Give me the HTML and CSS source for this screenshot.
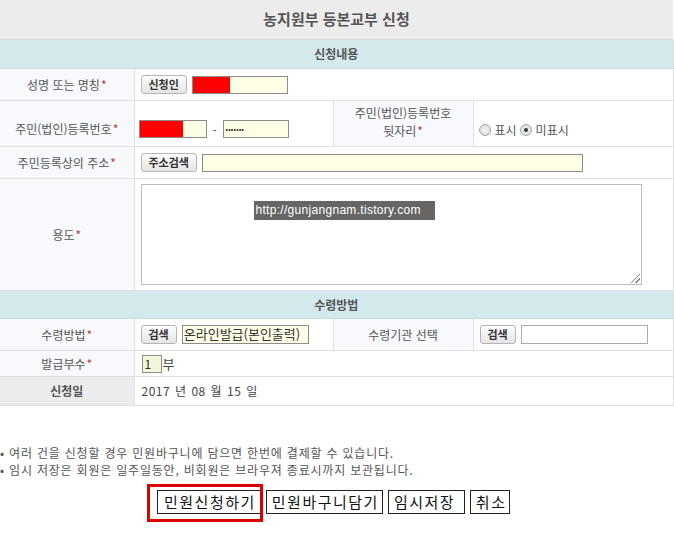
FILE: index.html
```html
<!DOCTYPE html>
<html lang="ko">
<head>
<meta charset="utf-8">
<link rel="stylesheet" href="styles.css">
</head>
<body>
<div class="page">
  <div class="title">농지원부 등본교부 신청</div>
  <table class="form">
    <colgroup>
      <col class="c1"><col class="c2"><col class="c3"><col class="c4">
    </colgroup>
    <tr class="sec"><td colspan="4">신청내용</td></tr>
    <tr class="r1">
      <th>성명 또는 명칭<em>*</em></th>
      <td colspan="3"><span class="btn">신청인</span><span class="inp w96 ml5"><span class="red r37"></span></span></td>
    </tr>
    <tr class="r2">
      <th class="low">주민(법인)등록번호<em>*</em></th>
      <td class="pl4 low"><span class="inp w68"><span class="red r43"></span></span><span class="dash">-</span><span class="inp w66 dots">•••••••</span></td>
      <th class="two">주민(법인)등록번호<br>뒷자리<em>*</em></th>
      <td class="radios low"><span class="radio"></span><span class="rl">표시</span><span class="radio on"></span><span class="rl">미표시</span></td>
    </tr>
    <tr class="r3">
      <th>주민등록상의 주소<em>*</em></th>
      <td colspan="3"><span class="btn">주소검색</span><span class="inp w381 ml5"></span></td>
    </tr>
    <tr class="r4">
      <th>용도<em>*</em></th>
      <td colspan="3"><div class="ta"><span class="wm">http://gunjangnam.tistory.com</span><span class="grip"></span></div></td>
    </tr>
    <tr class="sec"><td colspan="4">수령방법</td></tr>
    <tr class="r5">
      <th>수령방법<em>*</em></th>
      <td><span class="btn">검색</span><span class="inp w127 ml5 txt">온라인발급(본인출력)</span></td>
      <th>수령기관 선택</th>
      <td><span class="btn">검색</span><span class="inp w127 ml5 white"></span></td>
    </tr>
    <tr class="r6">
      <th>발급부수<em>*</em></th>
      <td colspan="3" class="pl6"><span class="inp w20 num">1</span><span class="bu">부</span></td>
    </tr>
    <tr class="r7">
      <th class="grey">신청일</th>
      <td colspan="3" class="date">2017 년 08 월 15 일</td>
    </tr>
  </table>
  <div class="notes">
    <p>• 여러 건을 신청할 경우 민원바구니에 담으면 한번에 결제할 수 있습니다.</p>
    <p>• 임시 저장은 회원은 일주일동안, 비회원은 브라우져 종료시까지 보관됩니다.</p>
  </div>
  <div class="actions">
    <span class="hl"><span class="abtn first">민원신청하기</span><span class="mark"></span></span><span class="abtn">민원바구니담기</span><span class="abtn">임시저장 </span><span class="abtn">취소</span>
  </div>
</div>
</body>
</html>
```
FILE: styles.css
```css
* { box-sizing: border-box; }
body {
  margin: 0;
  background: #fff;
  font-family: "Noto Sans CJK KR", "Noto Sans", sans-serif;
  font-size: 12px;
  color: #555;
}
.page { width: 674px; }
.title {
  width: 673px;
  height: 40px;
  background: #ececec;
  text-align: center;
  line-height: 38px;
  font-size: 15px;
  font-weight: bold;
  color: #555;
  border-bottom: 1px solid #dcdcdc;
}
.form {
  width: 673px;
  border-collapse: collapse;
  table-layout: fixed;
  border-right: 1px solid #ddd;
}
.c1 { width: 134px; }
.c2 { width: 199px; }
.c3 { width: 140px; }
.c4 { width: 200px; }
.form th, .form td {
  border-bottom: 1px solid #e0e0e0;
  padding: 0;
  vertical-align: middle;
}
.form th {
  background: #f7f9fc;
  font-weight: normal;
  text-align: center;
  color: #555;
  border-right: 1px solid #e0e0e0;
  white-space: nowrap;
}
.form td { padding-left: 6px; color: #444; }
.form td.pl4 { padding-left: 4px; border-right: 1px solid #e0e0e0; }
.form td.pl6 { padding-left: 7px; }
.form th em { font-style: normal; color: #c0392b; margin-left: 1px; }
.sec td {
  background: #d3e9ec;
  text-align: center;
  font-weight: bold;
  color: #555;
  height: 28px;
  padding: 0;
  border-bottom: 1px solid #c8dde0;
}
.r1 th, .r1 td { height: 32px; }
.r2 th, .r2 td { height: 46px; }
.r3 th, .r3 td { height: 32px; }
.r4 th, .r4 td { height: 112px; }
.r5 th, .r5 td { height: 32px; }
.r6 th, .r6 td { height: 26px; }
.r7 th, .r7 td { height: 29px; }
.form .low { padding-top: 11px; }
.r2 th.two { line-height: 18px; padding-bottom: 2px; }
.r5 td:nth-child(2) { border-right: 1px solid #e0e0e0; }
.grey { background: #ececec !important; font-weight: bold !important; }
.btn {
  display: inline-block;
  vertical-align: middle;
  height: 19px;
  line-height: 17px;
  padding: 0 7px;
  border: 1px solid #b5b5b5;
  border-radius: 3px;
  background: linear-gradient(#fdfdfd, #e4e4e4);
  font-size: 11px;
  font-weight: bold;
  color: #333;
}
.inp {
  display: inline-block;
  vertical-align: middle;
  position: relative;
  height: 18px;
  border: 1px solid #8c8c8c;
  background: #fefee6;
  overflow: hidden;
}
.inp.white { background: #fff; border-color: #a5acb5; }
.ml5 { margin-left: 5px; }
.w96 { width: 96px; }
.w68 { width: 68px; }
.w66 { width: 66px; }
.w381 { width: 381px; }
.w127 { width: 127px; height: 19px; }
.w20 { width: 20px; }
.red { display: block; height: 100%; background: #ff0000; }
.r37 { width: 37px; }
.r43 { width: 43px; }
.dash { display: inline-block; vertical-align: middle; width: 16px; text-align: center; color: #555; }
.dots { font-size: 7px; line-height: 16px; padding-left: 2px; color: #222; letter-spacing: 0.3px; }
.txt { font-size: 13px; line-height: 16px; color: #333; padding-left: 1px; }
.num { font-size: 12px; line-height: 16px; padding-left: 2px; color: #333; background: #f3f7da; }
.bu { vertical-align: middle; margin-left: 1px; color: #444; font-size: 13px; }
.radios { padding-left: 5px !important; }
.radio {
  display: inline-block;
  vertical-align: middle;
  width: 12px;
  height: 12px;
  border-radius: 50%;
  border: 1px solid #a8a8a8;
  background: radial-gradient(#f4f4f4, #d6d6d6);
  position: relative;
}
.radio.on::after {
  content: "";
  position: absolute;
  left: 3px; top: 3px;
  width: 4px; height: 4px;
  border-radius: 50%;
  background: #333;
}
.rl { vertical-align: middle; margin: 0 3px 0 4px; color: #555; }
.ta {
  position: relative;
  width: 501px;
  height: 101px;
  border: 1px solid #bdbdbd;
  background: #fff;
}
.wm {
  position: absolute;
  left: 112px;
  top: 16px;
  width: 181px;
  height: 19px;
  background: #666;
  color: #fff;
  font-family: "Liberation Sans", "DejaVu Sans", sans-serif;
  font-size: 12px;
  line-height: 19px;
  padding-left: 2px;
  letter-spacing: 0.3px;
}
.grip {
  position: absolute;
  right: 1px;
  bottom: 1px;
  width: 9px;
  height: 9px;
  background: linear-gradient(135deg, transparent 45%, #888 45%, #888 55%, transparent 55%, transparent 70%, #888 70%, #888 80%, transparent 80%);
}
.date { color: #444; font-size: 12px; padding-left: 7px !important; word-spacing: 1px; letter-spacing: 0.5px; }
.notes { margin-top: 38px; }
.notes p {
  margin: 0;
  font-size: 12px;
  line-height: 17px;
  color: #555;
  padding-left: 0;
  letter-spacing: 0.8px;
}
.actions {
  margin-top: 12px;
  padding-left: 157px;
  white-space: nowrap;
  font-size: 0;
  height: 40px;
}
.abtn {
  display: inline-block;
  vertical-align: top;
  height: 24px;
  line-height: 22px;
  border: 1px solid #222;
  background: #fff;
  padding: 0 3px 0 5px;
  margin-right: 5px;
  font-size: 15px;
  letter-spacing: 1.5px;
  color: #111;
  white-space: pre;
}
.abtn.first { padding: 0 4px 0 6px; margin-right: 0; }
.hl { position: relative; display: inline-block; vertical-align: top; height: 24px; margin-right: 5px; }
.mark {
  position: absolute;
  left: -10px;
  top: -6px;
  width: 116px;
  height: 38px;
  border: 3px solid #dd0000;
}
```
